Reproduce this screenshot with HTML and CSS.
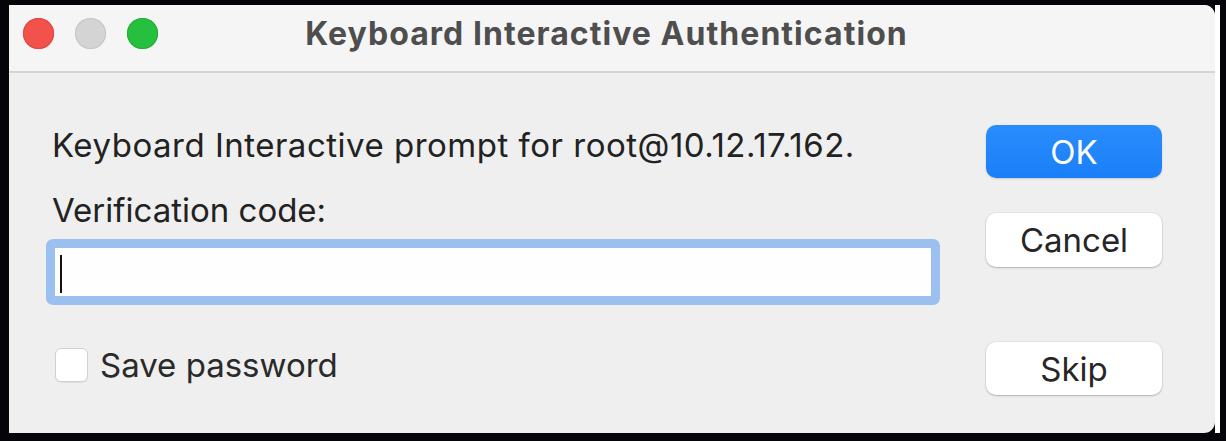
FILE: index.html
```html
<!DOCTYPE html>
<html lang="en">
<head>
<meta charset="utf-8">
<title>Keyboard Interactive Authentication</title>
<link rel="stylesheet" href="styles.css">
</head>
<body>
<div class="screen">
  <div class="window">
    <div class="titlebar">
      <div class="lights">
        <span class="light red"></span>
        <span class="light grey"></span>
        <span class="light green"></span>
      </div>
      <div class="title">Keyboard Interactive Authentication</div>
    </div>
    <div class="content">
      <div class="form">
        <div class="prompt">Keyboard Interactive prompt for root@10.12.17.162.</div>
        <div class="label">Verification code:</div>
        <div class="field"><span class="caret"></span></div>
        <label class="check-row">
          <span class="checkbox"></span>
          <span class="check-label">Save password</span>
        </label>
      </div>
      <div class="buttons">
        <div class="btn btn-primary">OK</div>
        <div class="btn btn-cancel">Cancel</div>
        <div class="btn btn-skip">Skip</div>
      </div>
    </div>
  </div>
  <div class="edge"></div>
</div>
</body>
</html>
```
FILE: styles.css
```css
html, body {
  margin: 0;
  padding: 0;
  background: #050409;
}

body {
  width: 1226px;
  height: 441px;
  overflow: hidden;
  font-family: "Inter", "Liberation Sans", sans-serif;
}

.screen {
  display: flex;
  padding: 5px 0 0 9px;
}

.window {
  width: 1206px;
  height: 428px;
  background: #efefef;
  border-radius: 0 11px 11px 0;
  overflow: hidden;
  display: flex;
  flex-direction: column;
}

.edge {
  width: 5px;
  height: 428px;
  background: #ffffff;
}

.titlebar {
  height: 66px;
  flex: none;
  background: #f6f5f5;
  border-bottom: 2px solid #d4d4d4;
  display: grid;
  align-items: center;
}

.lights {
  grid-area: 1 / 1;
  display: flex;
  gap: 21px;
  padding-left: 14px;
  align-self: start;
  padding-top: 13px;
}

.light {
  width: 31px;
  height: 31px;
  border-radius: 50%;
  display: block;
}

.light.red { background: #f3524c; box-shadow: inset 0 0 0 1px #e2443f; }
.light.grey { background: #d4d4d4; box-shadow: inset 0 0 0 1px #c6c6c6; }
.light.green { background: #27c03e; box-shadow: inset 0 0 0 1px #1fae33; }

.title {
  grid-area: 1 / 1;
  justify-self: center;
  padding-right: 11px;
  font-weight: 700;
  font-size: 32px;
  letter-spacing: 1.05px;
  color: #4e4e4e;
  line-height: 40px;
  margin-top: -8px;
}

.content {
  flex: 1;
  display: flex;
  justify-content: space-between;
  padding: 52px 53px 0 43px;
}

.form {
  display: flex;
  flex-direction: column;
  align-items: flex-start;
}

.prompt, .label, .check-label {
  font-size: 33px;
  line-height: 40px;
  color: #222222;
  white-space: nowrap;
}

.prompt {
  letter-spacing: 0.5px;
}

.label {
  margin-top: 25px;
}

.field {
  margin-top: 9px;
  margin-left: -6px;
  width: 876px;
  height: 48px;
  background: #fefefe;
  border: 9px solid #9bbfee;
  border-radius: 7px;
  display: flex;
  align-items: flex-start;
}

.caret {
  display: block;
  width: 2px;
  height: 38px;
  margin: 7px 0 0 5px;
  background: #111111;
}

.check-row {
  margin-top: 40px;
  display: flex;
  align-items: center;
  gap: 12px;
  margin-left: 3px;
}

.checkbox {
  display: block;
  width: 31px;
  height: 32px;
  background: #ffffff;
  border: 1px solid #d0d0d0;
  border-radius: 6px;
  box-shadow: 0 1px 1px rgba(0, 0, 0, 0.06);
}

.check-label {
  color: #2a2a2a;
}

.buttons {
  width: 176px;
  display: flex;
  flex-direction: column;
  align-items: stretch;
}

.btn {
  height: 53px;
  border-radius: 10px;
  display: flex;
  align-items: center;
  justify-content: center;
  font-size: 33px;
  color: #262626;
  background: #ffffff;
  box-shadow: 0 1px 2px rgba(0, 0, 0, 0.22), 0 0 0 1px rgba(0, 0, 0, 0.04);
}

.btn-primary {
  background: linear-gradient(#2a8cfc, #1a7ff8);
  color: #ffffff;
  box-shadow: 0 1px 2px rgba(0, 0, 0, 0.15);
}

.btn-cancel {
  margin-top: 35px;
  height: 54px;
}

.btn-skip {
  margin-top: 75px;
}
```
